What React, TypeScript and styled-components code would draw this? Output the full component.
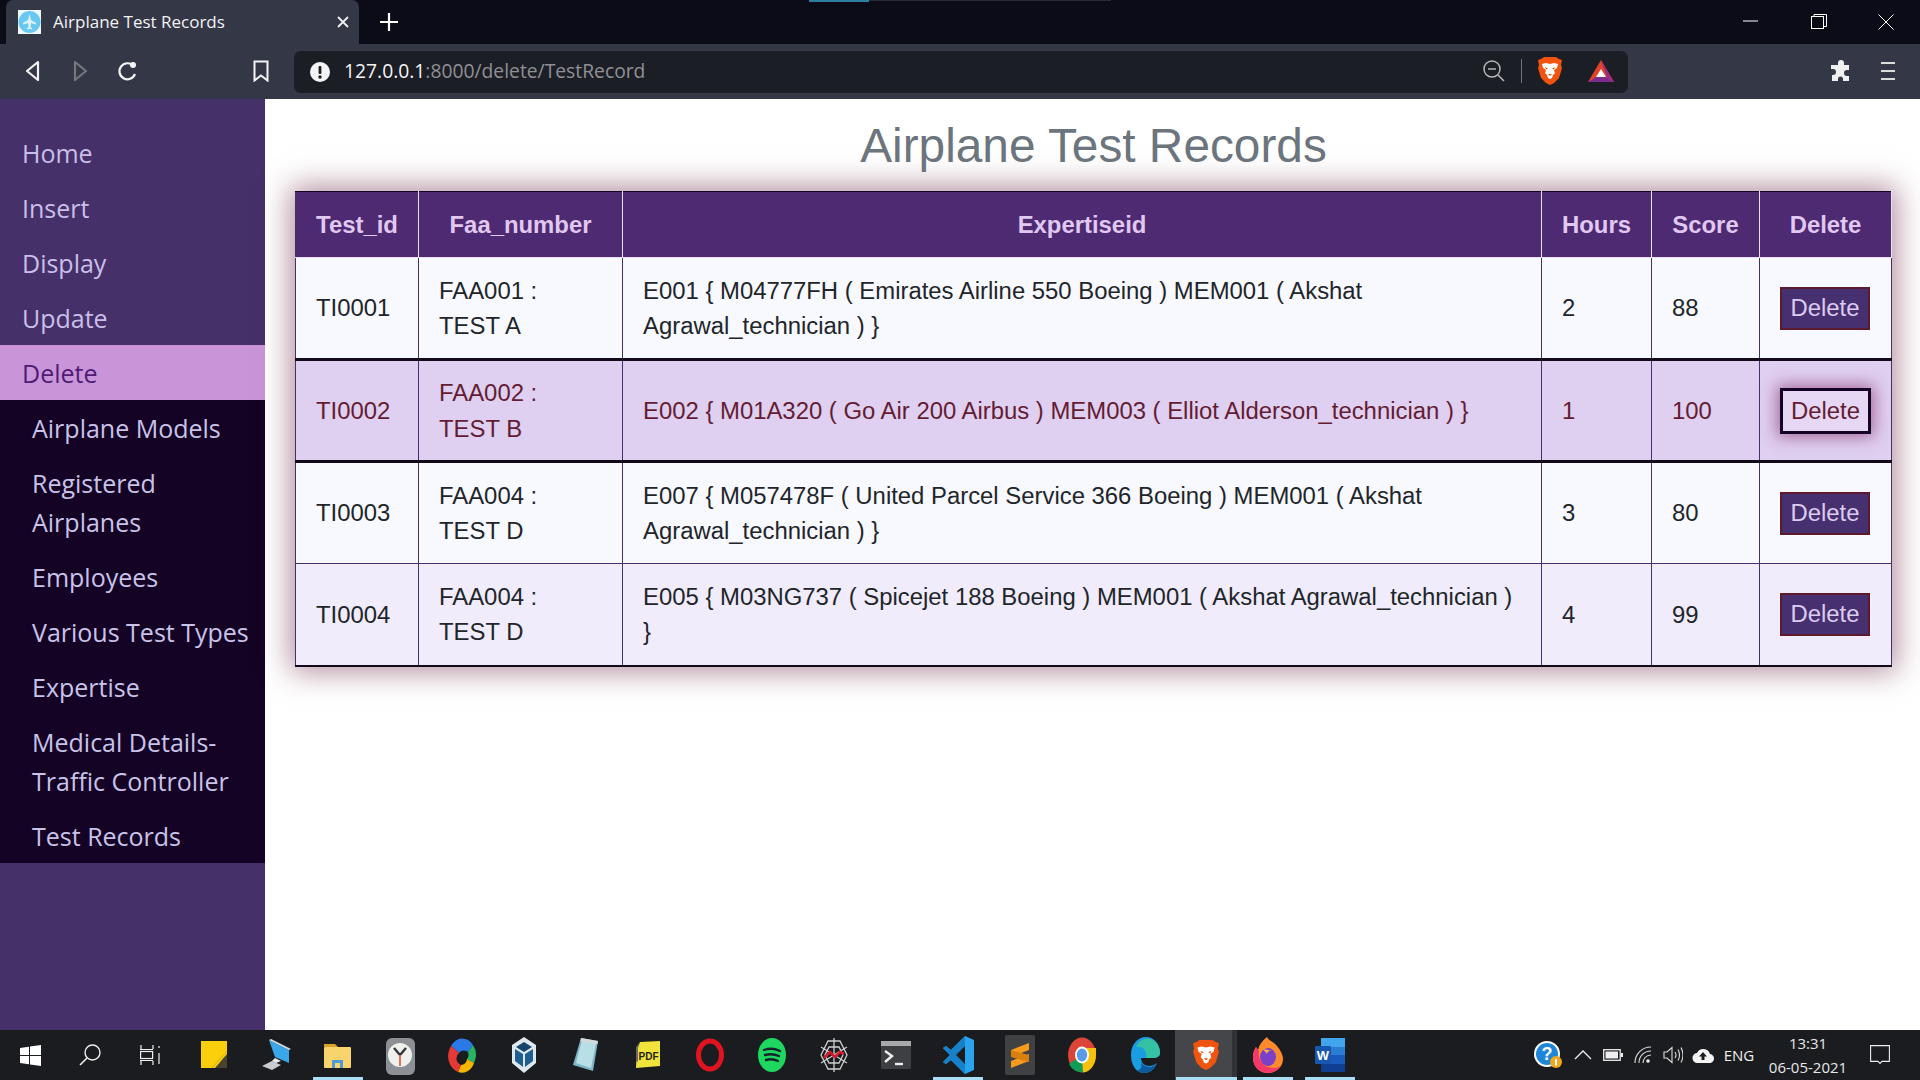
import React from "react";
import styled, { createGlobalStyle } from "styled-components";

const Global = createGlobalStyle`
  html, body { margin: 0; padding: 0; height: 100%; background: #fff; }
  #root { height: 100%; }
  * { box-sizing: border-box; }
`;

const Screen = styled.div`
  width: 1920px;
  height: 1080px;
  display: grid;
  grid-template-rows: 44px 55px 931px 50px;
  overflow: hidden;
`;

/* ---------- Browser chrome ---------- */
const TabStrip = styled.div`
  background: #0c0c19;
  display: flex;
  padding-left: 6px;
  position: relative;
`;
const LoadBar = styled.div`
  position: absolute;
  top: 0;
  left: 809px;
  width: 60px;
  height: 2px;
  background: #2c7f9e;
`;
const LoadBarRest = styled.div`
  position: absolute;
  top: 0;
  left: 869px;
  width: 242px;
  height: 1px;
  background: #2a2a38;
`;
const Tab = styled.div`
  width: 353px;
  height: 44px;
  background: #343746;
  border-radius: 7px 7px 0 0;
  display: flex;
  align-items: center;
  padding: 0 9px 0 12px;
  color: #f2f2f5;
  font: 17px "Open Sans", sans-serif;
`;
const TabTitle = styled.span`
  flex: 1;
  margin: 0 0 2px 12px;
  white-space: nowrap;
`;
const NewTab = styled.div`
  width: 60px;
  display: flex;
  align-items: center;
  justify-content: center;
`;
const WindowControls = styled.div`
  margin-left: auto;
  display: flex;
  align-items: center;
  padding-right: 1px;
`;
const WinButton = styled.div`
  width: 67.5px;
  height: 40px;
  display: flex;
  align-items: center;
  justify-content: center;
`;
const Toolbar = styled.div`
  background: #343746;
  display: flex;
  align-items: center;
  padding-left: 9px;
`;
const ToolButton = styled.div<{ $w?: number }>`
  width: ${(p) => p.$w ?? 47}px;
  height: 42px;
  margin-top: -2px;
  display: flex;
  align-items: center;
  justify-content: center;
  flex: none;
`;
const Spacer = styled.div<{ $w: number }>`
  width: ${(p) => p.$w}px;
  flex: none;
`;
const UrlBar = styled.div`
  width: 1334px;
  height: 42px;
  margin: 0 189px 0 10px;
  background: #1c1e25;
  border-radius: 7px;
  display: flex;
  align-items: center;
  padding-left: 16px;
  flex: none;
`;
const UrlText = styled.div`
  font: 19.3px "Open Sans", sans-serif;
  color: #8f9096;
  margin: 0 0 2px 14px;
  white-space: nowrap;
`;
const UrlHost = styled.span`
  color: #f4f4f6;
`;
const UrlTools = styled.div`
  margin-left: auto;
  display: flex;
  align-items: center;
  padding-right: 11px;
  margin-top: -2px;
`;
const UrlSep = styled.div`
  width: 1px;
  height: 24px;
  background: #70727c;
  margin: 0 15px 0 16px;
`;

/* ---------- Page ---------- */
const Page = styled.div`
  display: flex;
  min-height: 0;
  background: #fff;
`;
const Sidebar = styled.nav`
  width: 265px;
  flex: none;
  background: #46306a;
  padding-top: 26px;
  font: 25px/39px "Open Sans", sans-serif;
`;
const NavItem = styled.div<{ $active?: boolean }>`
  padding: 9px 22px 7px;
  color: ${(p) => (p.$active ? "#4f1c74" : "#c9bfe8")};
  background: ${(p) => (p.$active ? "#c995d8" : "transparent")};
`;
const SubMenu = styled.div`
  background: #150325;
`;
const SubItem = styled.div`
  padding: 9px 8px 7px 32px;
  color: #c9c3ea;
`;
const Main = styled.main`
  flex: 1;
  padding: 0 29px 0 30px;
  font-family: "Liberation Sans", Arial, sans-serif;
`;
const Title = styled.h1`
  margin: 0;
  height: 92px;
  padding: 18px 0 0 0;
  font: 400 47.8px/58px "Liberation Sans", Arial, sans-serif;
  color: #6c757d;
  text-align: center;
`;
const Table = styled.table`
  width: 1596px;
  table-layout: fixed;
  border-collapse: collapse;
  font-size: 23.88px;
  line-height: 35.5px;
  box-shadow: 0 0 28px 4px rgba(110, 40, 70, 0.55);
`;
const HeadCell = styled.th`
  height: 66px;
  padding: 0 20px;
  background: #4d2a72;
  color: #e0c8f0;
  font-weight: 700;
  text-align: center;
  border: 1px solid #e9e1f3;
  border-top: 1px solid #150325;
  &:first-child { border-left: 1px solid #46306a; }
`;
const Row = styled.tr<{ $tone: "odd" | "even" | "hover"; $last?: boolean }>`
  background: ${(p) =>
    p.$tone === "hover" ? "#dfcff0" : p.$tone === "even" ? "#f0ecfb" : "#f8f8ff"};
  color: ${(p) => (p.$tone === "hover" ? "#631c33" : "#212529")};
  & > td {
    height: ${(p) => (p.$tone === "hover" ? 101 : 102)}px;
    border: 1px solid #46306a;
    ${(p) => p.$tone === "hover" && "border-top: 3px solid #120a1a; border-bottom: 3px solid #120a1a;"}
    ${(p) => p.$last && "border-bottom: 2px solid #120a1a;"}
  }
`;
const Cell = styled.td`
  padding: 14px 20px;
`;
const DeleteButton = styled.button<{ $hover?: boolean }>`
  display: block;
  width: ${(p) => (p.$hover ? 91 : 90)}px;
  height: ${(p) => (p.$hover ? 46 : 43)}px;
  padding: 0;
  font: 23.88px "Liberation Sans", Arial, sans-serif;
  background: ${(p) => (p.$hover ? "#e6d8f4" : "#46306f")};
  color: ${(p) => (p.$hover ? "#631c33" : "#dccbf0")};
  border: ${(p) => (p.$hover ? "3px solid #150325" : "2px solid #5c1a2c")};
  ${(p) => p.$hover && "box-shadow: 0 0 15px 3px rgba(128, 40, 100, 0.6);"}
`;

/* ---------- Taskbar ---------- */
const Taskbar = styled.footer`
  background: #1a1c20;
  display: flex;
  align-items: center;
  position: relative;
`;
const TaskSlot = styled.div<{ $w?: number; $open?: boolean; $active?: boolean }>`
  width: ${(p) => p.$w ?? 62}px;
  height: 50px;
  flex: none;
  display: flex;
  align-items: center;
  justify-content: center;
  position: relative;
  ${(p) => p.$active && "background: linear-gradient(to right, #44464a 57px, #303236 57px);"}
  ${(p) =>
    p.$open &&
    `&::after { content: ""; position: absolute; left: ${p.$active ? 1 : 6}px; right: ${p.$active ? 0 : 6}px; bottom: 0; height: 3px; background: #a8dff5; }`}
`;
const Tray = styled.div`
  margin-left: auto;
  display: flex;
  align-items: center;
  height: 50px;
`;
const TraySlot = styled.div<{ $w: number }>`
  width: ${(p) => p.$w}px;
  display: flex;
  align-items: center;
  justify-content: center;
  flex: none;
  color: #f0f0f0;
  font: 15px "Open Sans", sans-serif;
`;
const TrayClock = styled.div`
  width: 96px;
  text-align: center;
  color: #e8e8e8;
  font: 15px/24px "Open Sans", sans-serif;
  flex: none;
`;

/* ---------- Icons ---------- */
const Favicon = () => (
  <svg width="23" height="24" viewBox="0 0 23 24">
    <rect width="23" height="24" fill="#eef8fd" />
    <circle cx="11.5" cy="12" r="11" fill="#69c8f2" />
    <path d="M11.5 4l1.4 6 5.1 3v1.5l-5-1.5-.5 4 1.7 1.5v1l-2.7-.8-2.7.8v-1l1.7-1.5-.5-4-5 1.5V13l5.1-3z" fill="#dff3fb" />
  </svg>
);
const BraveLion = ({ w = 26, h = 30 }: { w?: number; h?: number }) => (
  <svg width={w} height={h} viewBox="0 0 26 30">
    <path d="M7 1h12l3 2 3 1-1 5 1 3-3 10-5 5-4 2-4-2-5-5L1 12l1-3-1-5 3-1z" fill="#f1540e" />
    <path d="M5 8l4-1 4 1 4-1 4 1-1 4-3 2 1 3-2 2-1 3-2 1-2-1-1-3-2-2 1-3-3-2z" fill="#fff" />
    <path d="M8 11l3 1.5-2 1zM18 11l-3 1.5 2 1zM11 18h4l-2 2z" fill="#f1540e" />
  </svg>
);

const AppIcons: Record<string, React.ReactNode> = {
  sticky: (
    <svg width="28" height="28" viewBox="0 0 28 28">
      <path d="M1 0h26v17L17 27H1z" fill="#fbcf0c" />
      <path d="M27 10v17H12z" fill="#4a4330" />
      <path d="M27 10v3L15 27h-3z" fill="#fbcf0c" />
    </svg>
  ),
  computer: (
    <svg width="30" height="34" viewBox="0 0 30 34">
      <path d="M8 2l20 10v13L14 19z" fill="#3aa7ea" />
      <path d="M8 2l2-1 20 10-2 1z" fill="#d5dce2" />
      <path d="M1 28l10-5 9 4-9 5z" fill="#c8ccd0" />
      <path d="M14 20l6 3-5 2-4-2z" fill="#e8e8e8" />
    </svg>
  ),
  folder: (
    <svg width="28" height="28" viewBox="0 0 28 28">
      <path d="M0 3h11l3 3H0z" fill="#d9a32a" />
      <rect y="6" width="27" height="21" rx="1" fill="#f9d36c" />
      <path d="M8 27v-8h11v8h-3v-5h-5v5z" fill="#4d9bd6" />
    </svg>
  ),
  clock: (
    <svg width="31" height="40" viewBox="0 0 31 40">
      <rect x="1" y="3" width="29" height="37" rx="6" fill="#8c9094" />
      <circle cx="15" cy="20" r="12" fill="#f0f0ec" />
      <path d="M15 20l-6-7M15 20l6-7" stroke="#33373a" strokeWidth="2.4" />
      <path d="M15 20v11" stroke="#d35a2c" strokeWidth="1.6" />
    </svg>
  ),
  capture: (
    <svg width="28" height="38" viewBox="0 0 28 38">
      <path d="M3 10A13 15 0 0 1 25 9l-5 7a6 6 0 0 0-9 1z" fill="#2b78e6" />
      <path d="M25 9a15 17 0 0 1 1 18l-7-4a7 7 0 0 0 1-7z" fill="#27b463" />
      <path d="M26 27a13 15 0 0 1-16 9l3-7a6 6 0 0 0 6-6z" fill="#f4b400" />
      <path d="M10 36A15 17 0 0 1 3 10l8 7a7 7 0 0 0 2 12z" fill="#e53935" />
    </svg>
  ),
  vbox: (
    <svg width="26" height="38" viewBox="0 0 26 38">
      <path d="M13 1l12 8v18l-12 10L1 27V9z" fill="#dfe8ef" />
      <path d="M13 6l8 5-8 5-8-5z" fill="#16466d" />
      <path d="M4 13l8 5v13l-8-6zM22 13l-8 5v13l8-6z" fill="#1f5f90" />
    </svg>
  ),
  notepad: (
    <svg width="28" height="36" viewBox="0 0 28 36">
      <path d="M9 1l17 3-5 30L1 28z" fill="#7fb6c6" />
      <path d="M10 3l14 3-5 25L4 26z" fill="#b9dfe6" />
      <path d="M9 1l17 3-.5 3L8.500 4z" fill="#d7d9da" />
    </svg>
  ),
  pdf: (
    <svg width="28" height="30" viewBox="0 0 28 30">
      <path d="M6 2l20-1v25l-24 2 1-20z" fill="#f2e23c" />
      <path d="M6 2L2 7v14l2 1V8z" fill="#6b6b5b" />
      <text x="14.500" y="20" textAnchor="middle" fontFamily="Liberation Sans" fontWeight="700" fontSize="10" fill="#222">PDF</text>
    </svg>
  ),
  opera: (
    <svg width="28" height="34" viewBox="0 0 28 34">
      <ellipse cx="14" cy="17" rx="11.500" ry="14" fill="none" stroke="#e01420" strokeWidth="5" />
    </svg>
  ),
  spotify: (
    <svg width="28" height="36" viewBox="0 0 28 36">
      <ellipse cx="14" cy="18" rx="14" ry="17" fill="#1ed760" />
      <path d="M6 13q8-3 16 1M7 18q7-2 14 1M8 23q6-2 12 1" stroke="#15232a" strokeWidth="2.400" fill="none" strokeLinecap="round" />
    </svg>
  ),
  spider: (
    <svg width="30" height="36" viewBox="0 0 30 36">
      <path d="M15 1v34M2 10l26 16M28 10L2 26M9 4l12 0 7 14-7 14H9L2 18zM10 10h10l4 8-4 8H10l-4-8z" stroke="#cfcfcf" strokeWidth="1.300" fill="none" />
      <path d="M5 21l6-6 5 5 5-5 4 2" stroke="#d6182c" strokeWidth="2.600" fill="none" />
    </svg>
  ),
  terminal: (
    <svg width="30" height="30" viewBox="0 0 30 30">
      <rect y="1" width="30" height="28" rx="1.500" fill="#3d3f42" />
      <rect y="1" width="30" height="5" fill="#a8a9aa" />
      <path d="M4 11l7 5-7 6" stroke="#eee" strokeWidth="2.400" fill="none" />
      <path d="M14 24h8" stroke="#eee" strokeWidth="2.400" />
    </svg>
  ),
  vscode: (
    <svg width="31" height="40" viewBox="0 0 31 40">
      <path d="M22 1l9 4v30l-9 4L8 25l-5 4-3-2 7-7-7-7 3-2 5 4z" fill="#2aa4ee" />
      <path d="M22 1v38L8 25l-5 4-3-2 7-7-7-7 3-2 5 4z" fill="#1680c8" />
      <path d="M22 11l-9 9 9 9z" fill="#1a1c20" />
    </svg>
  ),
  sublime: (
    <svg width="30" height="40" viewBox="0 0 30 40">
      <rect width="30" height="40" rx="2" fill="#404143" />
      <path d="M24 8L6 15v7l18-7zM24 19L6 26v7l18-7z" fill="#f79a1e" />
      <path d="M6 15l18 5v7L6 22z" fill="#d9810f" />
    </svg>
  ),
  chrome: (
    <svg width="28" height="36" viewBox="0 0 28 36">
      <ellipse cx="14" cy="18" rx="14" ry="17.500" fill="#db4437" />
      <path d="M14 18L1 27a14 17.500 0 0 0 14 8z" fill="#0f9d58" />
      <path d="M14 18l1 17.500A14 17.500 0 0 0 28 18V11H14z" fill="#f4c20d" />
      <ellipse cx="14" cy="18" rx="7" ry="8.500" fill="#fff" />
      <ellipse cx="14" cy="18" rx="5.200" ry="6.500" fill="#5a9be8" />
    </svg>
  ),
  edge: (
    <svg width="31" height="38" viewBox="0 0 31 38">
      <path d="M2 19C2 8 9 1 17 1c8 0 14 7 14 16 0 4-4 5-8 5H12c0 5 4 8 8 8 3 0 6-1 8-3-3 7-8 10-13 10C7 37 2 29 2 19z" fill="#1b9de2" />
      <path d="M7 11c3-7 10-10 15-8 6 2 9 8 9 14 0 4-4 5-8 5h-6c2-6-3-13-10-11z" fill="#35c1a4" />
      <path d="M12 24c0 4 4 7 8 7 3 0 6-1 8-4-3 7-8 10-13 10-3 0-5-1-7-3 5 1 5-6 4-10z" fill="#0d5a9e" />
    </svg>
  ),
  firefox: (
    <svg width="30" height="38" viewBox="0 0 30 38">
      <path d="M14 1c2 4 7 5 10 9 4 5 6 9 6 13 0 8-7 14-15 14S0 31 0 22c0-5 1-8 3-11l2 3c1-5 4-9 9-13z" fill="#ff8a2b" />
      <path d="M0 22c0 9 7 15 15 15 6 0 10-3 13-7-5 3-13 3-18-2-4-4-5-9-4-13L3 11C1 14 0 17 0 22z" fill="#f5386a" />
      <ellipse cx="15" cy="21" rx="8" ry="9" fill="#7c3fc8" />
      <path d="M10 13l10 2c-4-1-6 1-6 3z" fill="#ffb13b" />
    </svg>
  ),
  word: (
    <svg width="30" height="36" viewBox="0 0 30 36">
      <rect x="6" y="1" width="24" height="34" rx="1" fill="#2b7cd3" />
      <rect x="6" y="1" width="24" height="9" fill="#41a5ee" />
      <rect x="6" y="18" width="24" height="9" fill="#185abd" />
      <rect x="6" y="27" width="24" height="8" fill="#103f91" />
      <rect y="9" width="16" height="18" rx="1" fill="#1857b0" />
      <text x="8" y="23" textAnchor="middle" fontFamily="Liberation Sans" fontWeight="700" fontSize="13" fill="#fff">W</text>
    </svg>
  ),
};

const appsBefore: [string, boolean?][] = [
  ["sticky"], ["computer"], ["folder", true], ["clock"], ["capture"], ["vbox"], ["notepad"],
  ["pdf"], ["opera"], ["spotify"], ["spider"], ["terminal"], ["vscode", true], ["sublime"], ["chrome"], ["edge"],
];

const records = [
  { id: "TI0001", faa: "FAA001 : TEST A", exp: "E001 { M04777FH ( Emirates Airline 550 Boeing ) MEM001 ( Akshat Agrawal_technician ) }", hours: "2", score: "88" },
  { id: "TI0002", faa: "FAA002 : TEST B", exp: "E002 { M01A320 ( Go Air 200 Airbus ) MEM003 ( Elliot Alderson_technician ) }", hours: "1", score: "100" },
  { id: "TI0003", faa: "FAA004 : TEST D", exp: "E007 { M057478F ( United Parcel Service 366 Boeing ) MEM001 ( Akshat Agrawal_technician ) }", hours: "3", score: "80" },
  { id: "TI0004", faa: "FAA004 : TEST D", exp: "E005 { M03NG737 ( Spicejet 188 Boeing ) MEM001 ( Akshat Agrawal_technician ) }", hours: "4", score: "99" },
];
const tones = ["odd", "hover", "odd", "even"] as const;
const columns = [123, 204, 919, 110, 108, 132];
const headers = ["Test_id", "Faa_number", "Expertiseid", "Hours", "Score", "Delete"];
const topNav = ["Home", "Insert", "Display", "Update"];
const subNav = ["Airplane Models", "Registered Airplanes", "Employees", "Various Test Types", "Expertise", "Medical Details-Traffic Controller", "Test Records"];

export default function App() {
  return (
    <Screen>
      <Global />
      <TabStrip>
        <LoadBar />
        <LoadBarRest />
        <Tab>
          <Favicon />
          <TabTitle>Airplane Test Records</TabTitle>
          <svg width="14" height="14" viewBox="0 0 14 14">
            <path d="M2 2l10 10M12 2L2 12" stroke="#f0f0f0" strokeWidth="1.800" />
          </svg>
        </Tab>
        <NewTab>
          <svg width="20" height="20" viewBox="0 0 20 20">
            <path d="M10 1v18M1 10h18" stroke="#fff" strokeWidth="2.200" />
          </svg>
        </NewTab>
        <WindowControls>
          <WinButton>
            <svg width="16" height="16" viewBox="0 0 16 16"><path d="M0 7h15" stroke="#fff" /></svg>
          </WinButton>
          <WinButton>
            <svg width="16" height="16" viewBox="0 0 16 16">
              <rect x="0.500" y="2.500" width="12" height="12" fill="none" stroke="#fff" />
              <path d="M3 2.500V.5h12.500V12.500h-3" fill="none" stroke="#fff" />
            </svg>
          </WinButton>
          <WinButton>
            <svg width="16" height="16" viewBox="0 0 16 16"><path d="M.5.5l15 15M15.500.5l-15 15" stroke="#fff" /></svg>
          </WinButton>
        </WindowControls>
      </TabStrip>

      <Toolbar>
        <ToolButton>
          <svg width="16" height="22" viewBox="0 0 16 22"><path d="M13 2L2 11l11 9z" fill="none" stroke="#f4f4f4" strokeWidth="2.200" strokeLinejoin="round" /></svg>
        </ToolButton>
        <ToolButton>
          <svg width="16" height="22" viewBox="0 0 16 22"><path d="M3 2l11 9-11 9z" fill="none" stroke="#75777f" strokeWidth="2.200" strokeLinejoin="round" /></svg>
        </ToolButton>
        <ToolButton>
          <svg width="22" height="24" viewBox="0 0 22 24">
            <path d="M17.500 7A8 8 0 1 0 19 15" fill="none" stroke="#f4f4f4" strokeWidth="2.200" />
            <circle cx="17" cy="6" r="3" fill="#f4f4f4" />
          </svg>
        </ToolButton>
        <Spacer $w={87} />
        <ToolButton $w={47}>
          <svg width="16" height="22" viewBox="0 0 16 22"><path d="M1.500 1.500h13v19L8 15.500l-6.500 5z" fill="none" stroke="#f4f4f4" strokeWidth="2" /></svg>
        </ToolButton>
        <UrlBar>
          <svg width="20" height="20" viewBox="0 0 20 20">
            <circle cx="10" cy="10" r="10" fill="#f4f4f4" />
            <rect x="8.600" y="4" width="2.800" height="8" rx="1" fill="#1c1e25" />
            <circle cx="10" cy="15" r="1.700" fill="#1c1e25" />
          </svg>
          <UrlText>
            <UrlHost>127.0.0.1</UrlHost>:8000/delete/TestRecord
          </UrlText>
          <UrlTools>
            <svg width="22" height="22" viewBox="0 0 22 22">
              <circle cx="9" cy="9" r="8" fill="none" stroke="#b5b6ba" strokeWidth="1.500" />
              <path d="M5 9h8M15 15l6 6" stroke="#b5b6ba" strokeWidth="1.500" />
            </svg>
            <UrlSep />
            <BraveLion />
            <Spacer $w={24} />
            <svg width="28" height="24" viewBox="0 0 28 24">
              <path d="M14 1l13 22H1z" fill="#e0422c" />
              <path d="M1 23l13-8 13 8z" fill="#7b2c8f" />
              <path d="M14 1l13 22-7-4z" fill="#a02a7a" />
              <path d="M14 10l5 8H9z" fill="#fff" />
            </svg>
            <Spacer $w={2} />
          </UrlTools>
        </UrlBar>
        <ToolButton $w={47}>
          <svg width="22" height="22" viewBox="0 0 22 22">
            <path d="M8 2a3 3 0 0 1 6 0v2h5v5h-2a3 3 0 0 0 0 6h2v5H13v-2a2.500 2.500 0 0 0-5 0v2H2v-6h1a3 3 0 0 0 0-6H1V4h7z" fill="#f0f0f0" transform="translate(0 1)" />
          </svg>
        </ToolButton>
        <ToolButton $w={47}>
          <svg width="16" height="20" viewBox="0 0 16 20">
            <path d="M1 2h14M1 10h14M1 18h14" stroke="#dcdcdc" strokeWidth="2" />
          </svg>
        </ToolButton>
      </Toolbar>

      <Page>
        <Sidebar>
          {topNav.map((n) => (
            <NavItem key={n}>{n}</NavItem>
          ))}
          <NavItem $active>Delete</NavItem>
          <SubMenu>
            {subNav.map((n) => (
              <SubItem key={n}>{n}</SubItem>
            ))}
          </SubMenu>
        </Sidebar>
        <Main>
          <Title>Airplane Test Records</Title>
          <Table>
            <colgroup>
              {columns.map((w, i) => (
                <col key={i} style={{ width: w }} />
              ))}
            </colgroup>
            <thead>
              <tr>
                {headers.map((h) => (
                  <HeadCell key={h}>{h}</HeadCell>
                ))}
              </tr>
            </thead>
            <tbody>
              {records.map((r, i) => (
                <Row key={r.id} $tone={tones[i]} $last={i === 3}>
                  <Cell>{r.id}</Cell>
                  <Cell>{r.faa}</Cell>
                  <Cell>{r.exp}</Cell>
                  <Cell>{r.hours}</Cell>
                  <Cell>{r.score}</Cell>
                  <Cell>
                    <DeleteButton $hover={tones[i] === "hover"}>Delete</DeleteButton>
                  </Cell>
                </Row>
              ))}
            </tbody>
          </Table>
        </Main>
      </Page>

      <Taskbar>
        <TaskSlot $w={60}>
          <svg width="21" height="21" viewBox="0 0 21 21">
            <path d="M0 3l9-1.300V10H0zM10 1.500L21 0v10H10zM0 11h9v8.300L0 18zM10 11h11v10l-11-1.500z" fill="#fff" />
          </svg>
        </TaskSlot>
        <TaskSlot $w={60}>
          <svg width="22" height="22" viewBox="0 0 22 22">
            <circle cx="13.500" cy="8.500" r="7.500" fill="none" stroke="#eee" strokeWidth="1.400" />
            <path d="M8 14l-7 7" stroke="#eee" strokeWidth="1.600" />
          </svg>
        </TaskSlot>
        <TaskSlot $w={60}>
          <svg width="20" height="20" viewBox="0 0 20 20" fill="none" stroke="#eee" strokeWidth="1.200">
            <path d="M0 4.500h13M0 15.500h13M1 0v4M13 0v4M1 16v4M13 16v4M19 1v2M19 8v11" />
            <rect x="0.600" y="6.500" width="12" height="7" />
          </svg>
        </TaskSlot>
        <Spacer $w={3} />
        {appsBefore.map(([name, open]) => (
          <TaskSlot key={name} $open={open}>
            {AppIcons[name]}
          </TaskSlot>
        ))}
        <TaskSlot $open $active>
          <BraveLion w={28} h={38} />
        </TaskSlot>
        <TaskSlot $open>{AppIcons.firefox}</TaskSlot>
        <TaskSlot $open>{AppIcons.word}</TaskSlot>
        <Tray>
          <TraySlot $w={40}>
            <svg width="30" height="30" viewBox="0 0 30 30">
              <circle cx="14" cy="14" r="13" fill="#fff" />
              <circle cx="14" cy="14" r="11" fill="#1c86d8" />
              <text x="14" y="20" textAnchor="middle" fontFamily="Liberation Sans" fontWeight="700" fontSize="18" fill="#fff">?</text>
              <circle cx="23" cy="22" r="6" fill="#f2a71b" />
              <rect x="22" y="19" width="2" height="6.500" fill="#fff" />
            </svg>
          </TraySlot>
          <TraySlot $w={30}>
            <svg width="18" height="10" viewBox="0 0 18 10"><path d="M1 9l8-8 8 8" fill="none" stroke="#eee" strokeWidth="1.300" /></svg>
          </TraySlot>
          <TraySlot $w={30}>
            <svg width="20" height="12" viewBox="0 0 20 12">
              <rect x="0.700" y="0.700" width="16.500" height="10.600" fill="none" stroke="#eee" strokeWidth="1.300" />
              <rect x="2.500" y="2.500" width="12.500" height="7" fill="#eee" />
              <rect x="18" y="4" width="2" height="4" fill="#eee" />
            </svg>
          </TraySlot>
          <TraySlot $w={30}>
            <svg width="18" height="18" viewBox="0 0 18 18" fill="none" stroke="#ddd" strokeWidth="1.100">
              <path d="M1 17C1 8 8 1 17 1M5 17C5 10 10 5 17 5M9 17c0-4 3-8 8-8" />
              <circle cx="14" cy="15" r="1.800" fill="#eee" stroke="none" />
            </svg>
          </TraySlot>
          <TraySlot $w={30}>
            <svg width="20" height="18" viewBox="0 0 20 18" fill="none" stroke="#ddd" strokeWidth="1.100">
              <path d="M1 6h3l5-4.500v15L4 12H1zM12 6q2 3 0 6M15 3.500q3 5.500 0 11M18 1.500q4 7.500 0 15" />
            </svg>
          </TraySlot>
          <TraySlot $w={30}>
            <svg width="22" height="15" viewBox="0 0 22 15">
              <path d="M6 15a5 5 0 0 1-1-10 7 7 0 0 1 13 1 4.500 4.500 0 0 1-1 9z" fill="#f4f4f4" />
              <path d="M11 4l4 4.500h-2.500V12h-3V8.500H7z" fill="#1a1c20" />
            </svg>
          </TraySlot>
          <TraySlot $w={42}>ENG</TraySlot>
          <TrayClock>
            13:31
            <br />
            06-05-2021
          </TrayClock>
          <TraySlot $w={48}>
            <svg width="20" height="20" viewBox="0 0 20 20">
              <path d="M.6.6h18.800v15.800H12l-2 2-2-2H.6z" fill="none" stroke="#eee" strokeWidth="1.100" />
            </svg>
          </TraySlot>
          <Spacer $w={17} />
        </Tray>
      </Taskbar>
    </Screen>
  );
}
